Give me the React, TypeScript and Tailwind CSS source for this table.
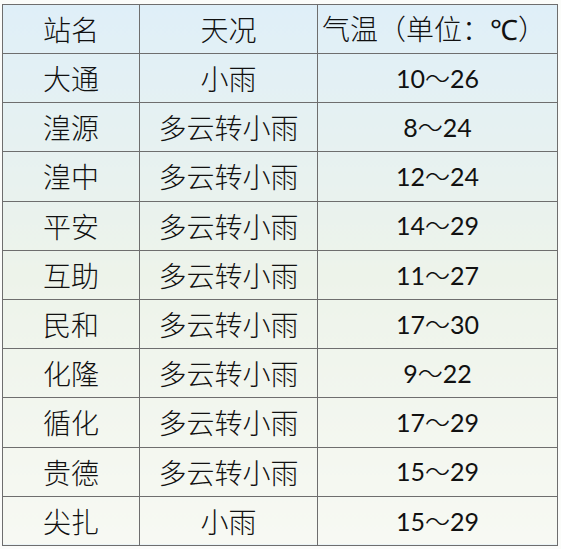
import React from 'react';

const rows: [string, string, string][] = [
  ['大通', '小雨', '10～26'],
  ['湟源', '多云转小雨', '8～24'],
  ['湟中', '多云转小雨', '12～24'],
  ['平安', '多云转小雨', '14～29'],
  ['互助', '多云转小雨', '11～27'],
  ['民和', '多云转小雨', '17～30'],
  ['化隆', '多云转小雨', '9～22'],
  ['循化', '多云转小雨', '17～29'],
  ['贵德', '多云转小雨', '15～29'],
  ['尖扎', '小雨', '15～29'],
];

const cjk = "font-['Noto_Sans_CJK_SC',sans-serif]";

const App: React.FC = () => {
  return (
    <div className="w-[561px] h-[549px] bg-[#fbfcfa] pt-1 pl-0.5">
      <table className="w-[556px] border-collapse bg-gradient-to-b from-[#dfeff8] via-[#edf3ea] to-[#f7f9f3] text-[#111]">
        <thead>
          <tr className="h-[49px]">
            <th className={`w-[137px] border-[1.5px] border-[#6e6e6e] font-light text-[28px] ${cjk}`}>站名</th>
            <th className={`w-[178px] border-[1.5px] border-[#6e6e6e] font-light text-[28px] ${cjk}`}>天况</th>
            <th className={`border-[1.5px] border-[#6e6e6e] font-light text-[28px] text-left pl-1 whitespace-nowrap ${cjk}`}>
              气温（单位：<span className="font-['Liberation_Sans',sans-serif] font-normal">℃</span>）
            </th>
          </tr>
        </thead>
        <tbody>
          {rows.map(([name, weather, temp]) => (
            <tr key={name} className="h-[49.2px]">
              <td className={`border-[1.5px] border-[#6e6e6e] text-center font-light text-[28px] leading-none ${cjk}`}>{name}</td>
              <td className={`border-[1.5px] border-[#6e6e6e] text-center font-light text-[28px] leading-none ${cjk}`}>{weather}</td>
              <td className="border-[1.5px] border-[#6e6e6e] text-center text-[25px] font-['Lato',sans-serif]">
                {temp.split('～')[0]}
                <span className={`font-light ${cjk}`}>～</span>
                {temp.split('～')[1]}
              </td>
            </tr>
          ))}
        </tbody>
      </table>
    </div>
  );
};

export default App;
